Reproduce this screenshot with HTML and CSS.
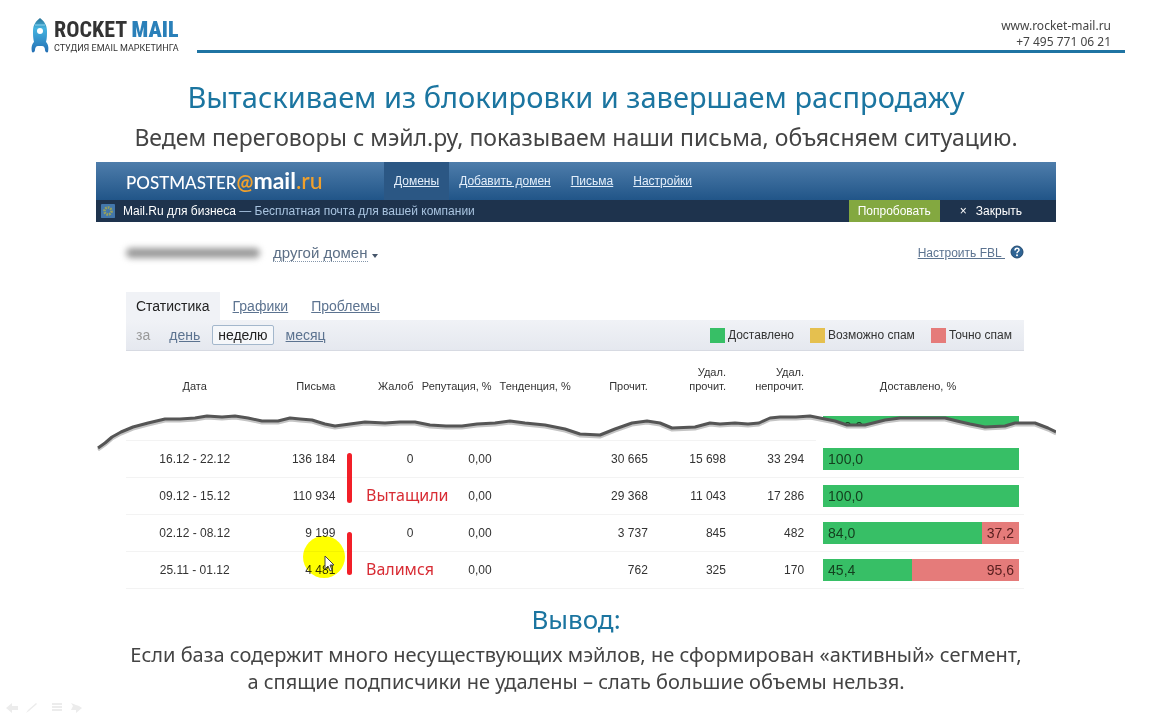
FILE: index.html
```html
<!DOCTYPE html>
<html lang="ru">
<head>
    <meta charset="UTF-8">
    <meta name="viewport" content="width=device-width, initial-scale=1.0">
    <title>Rocket Mail</title>
    <link rel="stylesheet" href="styles.css">
</head>
<body>
    <header class="header">
        <a class="logo" href="#">
            <svg class="logo-icon" width="18" height="36" viewBox="0 0 18 36" aria-hidden="true">
                <defs>
                    <linearGradient id="rocket" x1="0" y1="0" x2="0" y2="1">
                        <stop offset="0" stop-color="#2a7396"/>
                        <stop offset="0.3" stop-color="#45b4e0"/>
                        <stop offset="1" stop-color="#246fb4"/>
                    </linearGradient>
                </defs>
                <path fill="url(#rocket)" d="M9 1C5 4 2 8 2 14c0 4 0 7 1 11-2 2-3 5-2 10 1 1 3 0 3-2 0-2 1-4 3-4h4c2 0 3 2 3 4 0 2 2 3 3 2 1-5 0-8-2-10 1-4 1-7 1-11 0-6-3-10-7-13z"/>
                <path stroke="#8fd4ee" stroke-width="1" fill="none" d="M4 8h10"/>
                <circle cx="9" cy="14" r="3" fill="#fff"/>
            </svg>
            <span class="logo-text">
                <span class="logo-name">ROCKET <b>MAIL</b></span>
                <span class="logo-sub">СТУДИЯ EMAIL МАРКЕТИНГА</span>
            </span>
        </a>
        <div class="contacts">
            <a href="#">www.rocket-mail.ru</a>
            <span>+7 495 771 06 21</span>
        </div>
    </header>

    <main class="slide">
        <h1>Вытаскиваем из блокировки и завершаем распродажу</h1>
        <p class="lead">Ведем переговоры с мэйл.ру, показываем наши письма, объясняем ситуацию.</p>

        <section class="panel">
            <div class="topbar">
                <a class="brand" href="#">POSTMASTER<b class="orange">@</b><b>mail</b><span class="orange">.ru</span></a>
                <nav class="nav">
                    <a class="active" href="#">Домены</a>
                    <a href="#">Добавить домен</a>
                    <a href="#">Письма</a>
                    <a href="#">Настройки</a>
                </nav>
            </div>

            <div class="promo">
                <svg width="14" height="14" viewBox="0 0 16 16" aria-hidden="true">
                    <rect width="16" height="16" rx="1" fill="#4377ab"/>
                    <circle cx="8" cy="8" r="4" fill="none" stroke="#9aa35a" stroke-width="3" stroke-dasharray="2 1"/>
                    <circle cx="8" cy="8" r="1" fill="#4377ab"/>
                </svg>
                <p><b>Mail.Ru для бизнеса</b> — Бесплатная почта для вашей компании</p>
                <button class="try">Попробовать</button>
                <button class="close"><span>×</span>Закрыть</button>
            </div>

            <div class="content">
                <div class="domain">
                    <span class="hidden-name"></span>
                    <button class="other"><span>другой домен</span></button>
                    <a class="fbl" href="#">Настроить FBL&nbsp;</a>
                    <svg class="help" width="14" height="14" viewBox="0 0 14 14" aria-hidden="true">
                        <circle cx="7" cy="7" r="6" fill="#2f6494" stroke="#234a70"/>
                        <path d="M5 5.500c0-3 4-3 4-.5 0 1.500-2 1.500-2 3.200" fill="none" stroke="#fff" stroke-width="1.500"/>
                        <circle cx="7" cy="10.300" r="1" fill="#fff"/>
                    </svg>
                </div>

                <nav class="tabs">
                    <a class="active" href="#">Статистика</a>
                    <a href="#">Графики</a>
                    <a href="#">Проблемы</a>
                </nav>
                <div class="filter">
                    <span class="muted">за</span>
                    <a href="#">день</a>
                    <button class="current">неделю</button>
                    <a href="#">месяц</a>
                    <ul class="legend">
                        <li><i class="good"></i>Доставлено</li>
                        <li><i class="maybe"></i>Возможно спам</li>
                        <li><i class="spam"></i>Точно спам</li>
                    </ul>
                </div>

                <table class="stats">
                    <colgroup>
                        <col class="c-date"><col class="c-mail"><col class="c-num"><col class="c-num"><col class="c-num"><col class="c-num"><col class="c-num"><col class="c-num"><col class="c-bar">
                    </colgroup>
                    <thead>
                        <tr>
                            <th>Дата</th>
                            <th>Письма</th>
                            <th>Жалоб</th>
                            <th>Репутация, %</th>
                            <th>Тенденция, %</th>
                            <th>Прочит.</th>
                            <th>Удал.<br>прочит.</th>
                            <th>Удал.<br>непрочит.</th>
                            <th>Доставлено, %</th>
                        </tr>
                    </thead>
                    <tbody>
                        <tr class="cut">
                            <td></td><td></td><td></td><td></td><td></td><td></td><td></td><td></td>
                            <td><div class="bar"><span class="good" style="width: 100%">100,0</span></div></td>
                        </tr>
                        <tr>
                            <td>16.12 - 22.12</td><td>136 184</td><td>0</td><td>0,00</td><td></td><td>30 665</td><td>15 698</td><td>33 294</td>
                            <td><div class="bar"><span class="good" style="width: 100%">100,0</span></div></td>
                        </tr>
                        <tr>
                            <td>09.12 - 15.12</td><td>110 934</td><td></td><td>0,00</td><td></td><td>29 368</td><td>11 043</td><td>17 286</td>
                            <td><div class="bar"><span class="good" style="width: 100%">100,0</span></div></td>
                        </tr>
                        <tr>
                            <td>02.12 - 08.12</td><td>9 199</td><td>0</td><td>0,00</td><td></td><td>3 737</td><td>845</td><td>482</td>
                            <td><div class="bar"><span class="good" style="width: 81%">84,0</span><span class="spam" style="width: 19%">37,2</span></div></td>
                        </tr>
                        <tr>
                            <td>25.11 - 01.12</td><td>4 481</td><td></td><td>0,00</td><td></td><td>762</td><td>325</td><td>170</td>
                            <td><div class="bar"><span class="good" style="width: 45.4%">45,4</span><span class="spam" style="width: 54.6%">95,6</span></div></td>
                        </tr>
                    </tbody>
                </table>
            </div>

            <!-- torn edge that cuts off the rows above -->
            <svg class="tear" viewBox="0 0 960 40" preserveAspectRatio="none" aria-hidden="true">
                <defs>
                    <path id="edge" d="M2 37L9 32 16 26 25 21 37 16 52 12 69 8 84 8 99 7 111 5 126 6 139 5 152 7 166 10 182 10 194 7 204 8 216 9 229 13 239 15 254 13 269 11 289 12 304 11 319 11 334 14 350 15 366 15 381 13 399 12 414 10 429 12 449 14 469 18 484 23 504 24 519 18 536 12 551 10 564 12 576 17 599 16 614 12 624 13 639 12 652 13 663 12 674 7 684 6 700 6 714 5 729 8 739 10 751 14 769 14 789 9 804 7 849 7 861 10 874 13 889 16 909 15 919 12 939 12 952 17 960 21"/>
                </defs>
                <path fill="#fff" d="M720 6L729 8 739 10 751 14 769 14 789 9 804 7 849 7 861 10 874 13 889 16 909 15 919 12 928 12V30H720z"/>
                <use href="#edge" y="2" fill="none" stroke="#c4c4c4" stroke-width="3" stroke-linejoin="round"/>
                <use href="#edge" fill="none" stroke="#555" stroke-width="3" stroke-linejoin="round"/>
            </svg>

            <span class="mark mark-up"></span>
            <span class="note note-up">Вытащили</span>
            <span class="mark mark-down"></span>
            <span class="note note-down">Валимся</span>
            <span class="spot"></span>
            <svg class="cursor" width="12" height="18" viewBox="0 0 12 18" aria-hidden="true">
                <path d="M1 1v13l3-3 2 5 2-1-2-5h4z" fill="#fff" stroke="#444"/>
            </svg>
        </section>

        <h2>Вывод:</h2>
        <p class="summary">Если база содержит много несуществующих мэйлов, не сформирован «активный» сегмент,<br>а спящие подписчики не удалены – слать большие объемы нельзя.</p>
    </main>

    <footer class="controls">
        <svg width="80" height="12" viewBox="0 0 80 12" fill="#ececec" aria-hidden="true">
            <path d="M0 6l6-5v3h6v4H6v3z"/>
            <path d="M20 11l2-3 8-7 1 1-8 7z"/>
            <path d="M46 1h10v2H46zM46 4h10v2H46zM46 7h10v2H46z"/>
            <path d="M76 6l-6 5V8h-5l2-4-2-3 5 2 3 1z"/>
        </svg>
    </footer>
</body>
</html>
```
FILE: styles.css
```css
* {
    box-sizing: border-box;
}

body {
    margin: 0;
    min-height: 100vh;
    display: flex;
    flex-direction: column;
    background: #fff;
    color: #444;
    font-family: "Noto Sans", "Open Sans", sans-serif;
}

h1, h2, p, ul {
    margin: 0;
    padding: 0;
    font-weight: normal;
}

button {
    border: none;
    background: none;
    font: inherit;
    color: inherit;
    cursor: pointer;
}

.header {
    display: flex;
    align-items: flex-end;
    gap: 18px;
    padding: 17px 27px 0 31px;
}

.logo {
    display: flex;
    gap: 5px;
    text-decoration: none;
    color: #333;
}

.logo-text {
    display: flex;
    flex-direction: column;
    white-space: nowrap;
}

.logo-name {
    font: bold 22px/26px "Roboto Condensed", "Liberation Sans Narrow", "Liberation Sans", sans-serif;
}

.logo-name b {
    color: #2a80b9;
}

.logo-sub {
    font: 9px/10px Roboto, sans-serif;
}

.contacts {
    flex: 1;
    display: flex;
    flex-direction: column;
    align-items: flex-end;
    padding-right: 14px;
    border-bottom: 3px solid #1f74a3;
    font-size: 12px;
    line-height: 16px;
}

.contacts a {
    color: inherit;
    text-decoration: none;
}

.slide {
    padding: 24px 96px 0;
    text-align: center;
}

h1, h2 {
    color: #1b75a0;
    font-size: 29px;
    line-height: 40px;
}

h2 {
    font-size: 26px;
}

.lead {
    font-size: 23px;
    line-height: 40px;
    padding-bottom: 5px;
}

.summary {
    font-size: 20px;
    line-height: 27px;
    margin: 2px -20px 0;
}

.panel {
    position: relative;
    margin-bottom: 10px;
    text-align: left;
    font-family: "Liberation Sans", Arial, sans-serif;
    font-size: 12px;
    color: #333;
}

.topbar {
    display: flex;
    align-items: center;
    height: 38px;
    padding-left: 30px;
    background: linear-gradient(#4e7dab, #215588);
}

.brand {
    width: 258px;
    color: #fff;
    font: 500 17px/38px Lato, sans-serif;
    text-decoration: none;
}

.brand b {
    font-size: 23px;
}

.brand .orange {
    color: #f0a02c;
    font-size: 23px;
}

.brand b.orange {
    font-size: 20px;
}

.nav {
    display: flex;
    line-height: 38px;
}

.nav a {
    padding: 0 10px;
    color: #e4effb;
}

.nav .active {
    background: #2b5784;
}

.promo {
    display: flex;
    align-items: center;
    height: 22px;
    padding: 0 34px 0 5px;
    background: #1e334d;
    color: #a9c4e0;
}

.promo p {
    flex: 1;
    margin-left: 8px;
}

.promo b {
    color: #fff;
    font-weight: normal;
}

.try {
    align-self: stretch;
    padding: 0 9px;
    background: #83a840;
    color: #fff;
}

.close {
    padding: 0 0 0 20px;
    color: #fff;
}

.close span {
    margin-right: 9px;
}

.content {
    padding: 0 32px 0 30px;
}

.domain {
    display: flex;
    align-items: center;
    height: 70px;
    padding-bottom: 8px;
}

.hidden-name {
    width: 134px;
    height: 10px;
    border-radius: 5px;
    background: #999;
    filter: blur(3px);
}

.other {
    display: flex;
    align-items: center;
    gap: 4px;
    margin-right: auto;
    padding: 0 0 0 13px;
    font-size: 15px;
    color: #5c6f86;
}

.other span {
    border-bottom: 1px dotted #8496aa;
}

.other::after {
    content: "";
    margin-top: 6px;
    border: 3px solid transparent;
    border-top: 4px solid #46566a;
    border-bottom: none;
}

.fbl, .tabs a, .filter a {
    color: #5c7390;
}

.help {
    margin: 0 0 3px 5px;
}

.tabs {
    display: flex;
    gap: 3px;
    font-size: 14px;
    line-height: 28px;
}

.tabs a {
    padding: 0 10px;
}

.tabs .active {
    background: #f0f2f6;
    color: #222;
    text-decoration: none;
}

.filter {
    display: flex;
    align-items: center;
    gap: 12px;
    height: 31px;
    padding: 0 12px 0 10px;
    border-bottom: 1px solid #d7dae2;
    background: linear-gradient(#f0f2f6, #e5e8ef);
    font-size: 14px;
}

.filter a:first-of-type {
    margin-left: 7px;
}

.muted {
    color: #999;
}

.current {
    padding: 1px 5px;
    border: 1px solid #a3b7cc;
    border-radius: 2px;
    background: #f5f7fa;
    color: #222;
}

.legend {
    display: flex;
    gap: 16px;
    margin-left: auto;
    list-style: none;
    font-size: 12px;
}

.legend li {
    display: flex;
    align-items: center;
    gap: 3px;
}

.legend i {
    width: 15px;
    height: 15px;
}

.good {
    background: #37bf66;
}

.maybe {
    background: #e5c04f;
}

.spam {
    background: #e57b7a;
}

.stats {
    width: 100%;
    table-layout: fixed;
    border-collapse: collapse;
    white-space: nowrap;
    text-align: right;
}

.c-date { width: 15.3%; }
.c-mail { width: 8.9%; }
.c-num { width: 8.7%; }
.c-bar { width: 23.6%; }

.stats th {
    height: 52px;
    padding: 0 8px 10px 0;
    vertical-align: bottom;
    font-size: 11px;
    font-weight: normal;
    line-height: 14px;
}

.stats td {
    height: 37px;
    padding: 0 8px 0 0;
    border-bottom: 1px solid #f3f3f3;
}

.stats td:first-child {
    padding: 0;
    text-align: center;
}

.stats th:first-child,
.stats th:last-child {
    padding: 0 0 10px;
    text-align: center;
}

.stats td:last-child {
    padding: 0 5px 0 11px;
}

.stats .cut td {
    padding-bottom: 2px;
    vertical-align: bottom;
}

.bar {
    display: flex;
    font-size: 14px;
    line-height: 22px;
    color: #14401f;
}

.bar span {
    padding: 0 5px;
    text-align: left;
}

.bar .spam {
    color: #5a2020;
    text-align: right;
}

/* overlays */
.tear {
    position: absolute;
    left: 0;
    top: 249px;
    width: 100%;
    height: 40px;
}

.mark {
    position: absolute;
    left: 251px;
    width: 5px;
    border-radius: 3px;
    background: #f21f28;
}

.mark-up {
    top: 291px;
    height: 50px;
}

.mark-down {
    top: 370px;
    height: 43px;
}

.note {
    position: absolute;
    left: 270px;
    color: #d82c34;
    font: 16px/22px "Noto Sans", sans-serif;
}

.note-up {
    top: 322px;
}

.note-down {
    top: 396px;
}

.spot {
    position: absolute;
    left: 207px;
    top: 374px;
    width: 42px;
    height: 42px;
    border-radius: 50%;
    background: #ff0;
    mix-blend-mode: multiply;
}

.cursor {
    position: absolute;
    left: 228px;
    top: 393px;
}

.controls {
    display: flex;
    margin-top: auto;
    padding: 0 0 6px 6px;
}
```
